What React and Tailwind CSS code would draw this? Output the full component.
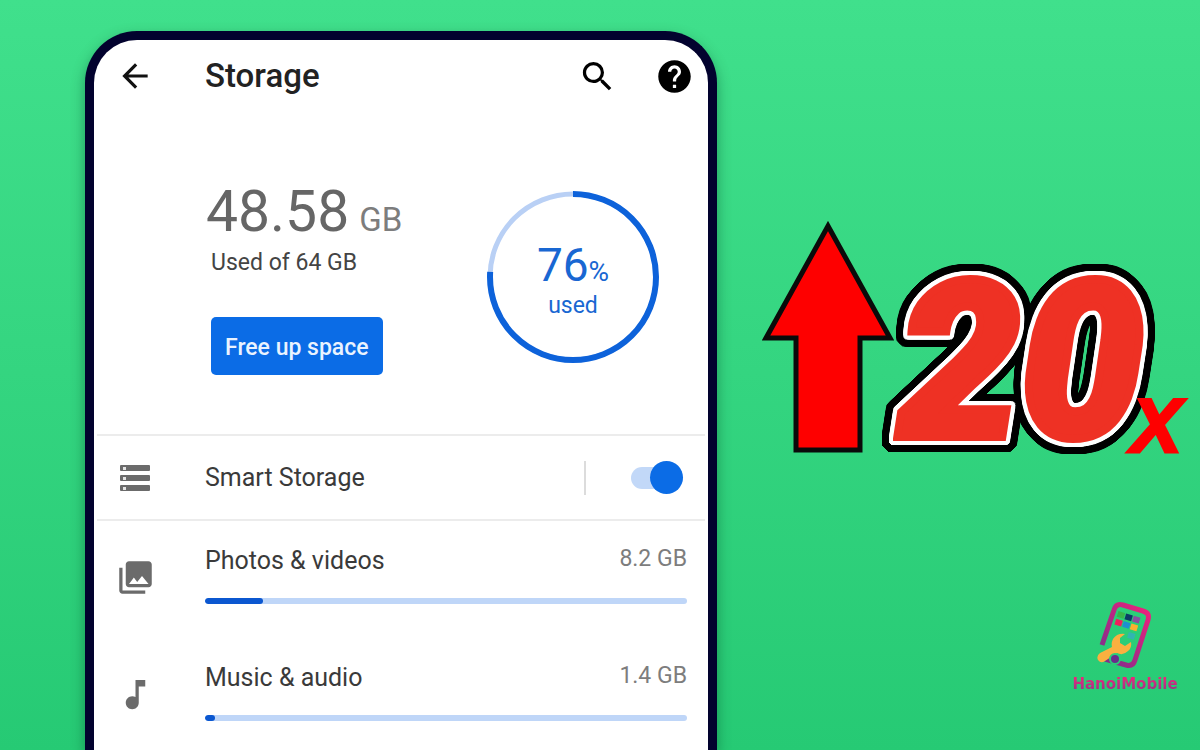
import { useState } from 'react';
import { MdArrowBack, MdHelp, MdMusicNote, MdPhotoLibrary, MdSearch } from 'react-icons/md';

const USED_PERCENT = 76;

const CATEGORIES = [
  { id: 'photos', name: 'Photos & videos', size: '8.2 GB', percent: 12, icon: <MdPhotoLibrary /> },
  { id: 'music', name: 'Music & audio', size: '1.4 GB', percent: 2, icon: <MdMusicNote /> },
];

const StorageIcon = () => (
  <svg viewBox="0 0 30 26" className="ml-1 h-[26px] w-[30px]" aria-hidden="true">
    {[0, 10, 20].map((y) => (
      <g key={y}>
        <rect x="0" y={y} width="30" height="6" rx="1" fill="#6b6b6b" />
        <rect x="3" y={y + 2} width="3" height="3" fill="#e4e4e4" />
      </g>
    ))}
  </svg>
);

const UsageRing = ({ percent }) => (
  <div className="grid size-[172px] place-items-center text-[#1967d2]">
    <svg viewBox="0 0 172 172" className="col-start-1 row-start-1 size-full -rotate-90" aria-hidden="true">
      <circle cx="86" cy="86" r="83" fill="none" stroke="#b9d0f5" strokeWidth="5" />
      <circle
        cx="86"
        cy="86"
        r="83"
        fill="none"
        stroke="#0d62da"
        strokeWidth="6"
        pathLength="100"
        strokeDasharray={`${percent} 100`}
      />
    </svg>
    <div className="col-start-1 row-start-1 pt-[10px] text-center">
      <p className="text-[46px] leading-[48px]">
        {percent}
        <span className="text-[28px] leading-[28px]">%</span>
      </p>
      <p className="text-[23px] leading-[34px]">used</p>
    </div>
  </div>
);

const CategoryRow = ({ category }) => (
  <li className="flex pt-[26px] pr-[21px] pb-[34px] last:pb-0">
    <div className="mt-[11px] w-[111px] shrink-0 pl-[22px] text-[39px] text-[#6b6b6b]">{category.icon}</div>
    <div className="flex-1">
      <div className="flex justify-between leading-[28px]">
        <span id={category.id} className="text-[25px] text-[#3a3a3a]">{category.name}</span>
        <span className="text-[23px] leading-[24px] text-[#7d7d7d]">{category.size}</span>
      </div>
      <div
        role="progressbar"
        aria-labelledby={category.id}
        aria-valuenow={category.percent}
        className="mt-[23px] h-[6px] overflow-hidden rounded-full bg-[#bfd6f8]"
      >
        <div className="h-full rounded-full bg-[#0b57d0]" style={{ width: `${category.percent}%` }} />
      </div>
    </div>
  </li>
);

const StorageScreen = () => {
  const [smartStorage, setSmartStorage] = useState(true);

  return (
    <section className="mt-[31px] rounded-t-[52px] border-[9px] border-b-0 border-[#02022e] bg-white shadow-[0_6px_14px_rgba(0,70,40,0.45)]">
      <header className="flex h-[72px] items-center pr-[14px]">
        <div className="w-[111px] pl-[22px]">
          <button type="button" aria-label="Back" className="block text-[38px] text-[#111]">
            <MdArrowBack />
          </button>
        </div>
        <h1 className="flex-1 text-[33px] leading-[40px] font-medium text-[#222]">Storage</h1>
        <div className="flex gap-[38px] text-[39px] text-black">
          <button type="button" aria-label="Search"><MdSearch /></button>
          <button type="button" aria-label="Help"><MdHelp /></button>
        </div>
      </header>

      <div className="mx-[3px] flex items-start justify-between border-b-2 border-[#ececec] pt-[68px] pr-[46px] pb-[59px] pl-[109px]">
        <div>
          <p className="text-[57px] leading-[64px] text-[#666]">
            48.58 <span className="-ml-1 text-[33px] leading-[33px] text-[#7d7d7d]">GB</span>
          </p>
          <p className="mt-[5px] pl-[5px] text-[23px] leading-[28px] text-[#444]">Used of 64 GB</p>
          <button
            type="button"
            className="mt-[40px] ml-[5px] h-[58px] rounded-[5px] bg-[#0b6ce6] px-[14px] pt-1 text-[23px] font-medium text-[#eaf3ff]"
          >
            Free up space
          </button>
        </div>
        <div className="mt-[11px]">
          <UsageRing percent={USED_PERCENT} />
        </div>
      </div>

      <div className="mx-[3px] flex h-[85px] items-center border-b-2 border-[#ececec] pr-[22px]">
        <div className="w-[108px] pl-[19px]">
          <StorageIcon />
        </div>
        <label htmlFor="smart-storage" className="flex-1 text-[25px] text-[#3a3a3a]">Smart Storage</label>
        <div className="mr-[45px] h-[34px] w-[2px] bg-[#dcdcdc]" />
        <input
          id="smart-storage"
          type="checkbox"
          role="switch"
          checked={smartStorage}
          onChange={(e) => setSmartStorage(e.target.checked)}
          className="flex h-[22px] w-[52px] appearance-none items-center rounded-full bg-[#c2d8f8] before:size-[33px] before:shrink-0 before:rounded-full before:bg-[#0b6ce6] checked:justify-end"
        />
      </div>

      <ul>
        {CATEGORIES.map((category) => (
          <CategoryRow key={category.id} category={category} />
        ))}
      </ul>
    </section>
  );
};

const UpArrow = () => (
  <svg viewBox="0 0 132 232" className="h-[232px] w-[132px] shrink-0" aria-hidden="true">
    <path
      d="M66 5 L128 117 H98 V229 H34 V117 H4 Z"
      fill="#fe0000"
      stroke="#0a0a0a"
      strokeWidth="5"
    />
  </svg>
);

const BrandLogo = () => (
  <div className="flex w-[108px] flex-col items-center">
    <svg viewBox="0 0 56 70" className="mb-1 h-[70px] w-[56px]" aria-hidden="true">
      <defs>
        <linearGradient id="case" x1="1" y1="0" x2="0" y2="1">
          <stop offset="0" stopColor="#f2207c" />
          <stop offset="1" stopColor="#75308c" />
        </linearGradient>
      </defs>
      <path
        d="M5 44 L17 9 Q19 2 26 4 L46 10 Q53 12 51 19 L38 59 Q36 66 29 64 L8 58"
        fill="none"
        stroke="url(#case)"
        strokeWidth="5"
      />
      <g transform="rotate(17 30 20)">
        <rect x="19" y="13" width="7" height="6" fill="#39b54a" />
        <rect x="27" y="13" width="7" height="6" fill="#0c3b66" />
        <rect x="35" y="13" width="7" height="6" fill="#8a4ea0" />
        <rect x="19" y="21" width="7" height="6" fill="#f0205c" />
        <rect x="27" y="21" width="7" height="6" fill="#1d8fd0" />
        <rect x="35" y="21" width="7" height="6" fill="#fbb030" />
        <rect x="35" y="30" width="7" height="6" fill="#32b5b0" />
      </g>
      <path
        d="M28 33 Q20 32 16 38 Q14 42 15 46 L3 52 Q-1 55 1 59 Q4 63 8 60 L20 52 Q26 55 31 50 Q35 47 34 41 L28 45 L23 42 L23 37 Z"
        fill="#fbb040"
      />
      <circle cx="18" cy="58" r="5" fill="#6a2c8c" stroke="#2bcf79" strokeWidth="2" />
    </svg>
    <p className="bg-gradient-to-b from-[#fb1878] to-[#8c3088] bg-clip-text font-['DejaVu_Sans'] text-[15px] leading-[18px] font-bold text-transparent">
      HanoiMobile
    </p>
  </div>
);

const App = () => (
  <main className="grid min-h-screen grid-cols-[minmax(0,632fr)_minmax(0,483fr)] overflow-hidden bg-gradient-to-b from-[#40e08c] to-[#26ca74] pl-[85px] font-[Roboto,sans-serif]">
    <StorageScreen />
    <aside className="flex flex-col justify-between pt-[221px] pr-[12px] pb-[57px] pl-[45px]">
      <div className="flex items-end whitespace-nowrap italic">
        <UpArrow />
        {/* white rim first, then the thicker black outline around it */}
        <span className="ml-1 text-[218px] leading-[180px] font-black text-[#ee3124] [-webkit-text-stroke:8px_#ee3124] [filter:drop-shadow(2px_0_white)_drop-shadow(-2px_0_white)_drop-shadow(0_2px_white)_drop-shadow(0_-2px_white)_drop-shadow(1px_1px_white)_drop-shadow(-1px_-1px_white)_drop-shadow(1px_-1px_white)_drop-shadow(-1px_1px_white)_drop-shadow(3px_0_black)_drop-shadow(-3px_0_black)_drop-shadow(0_3px_black)_drop-shadow(0_-3px_black)_drop-shadow(2px_2px_black)_drop-shadow(-2px_-2px_black)_drop-shadow(2px_-2px_black)_drop-shadow(-2px_2px_black)]">
          20
        </span>
        <span className="z-10 -ml-3 font-['Liberation_Sans'] text-[76px] leading-[54px] font-bold text-[#fe0000] [-webkit-text-stroke:3px_#fe0000]">X</span>
      </div>
      <div className="self-end pr-[9px]">
        <BrandLogo />
      </div>
    </aside>
  </main>
);

export default App;
